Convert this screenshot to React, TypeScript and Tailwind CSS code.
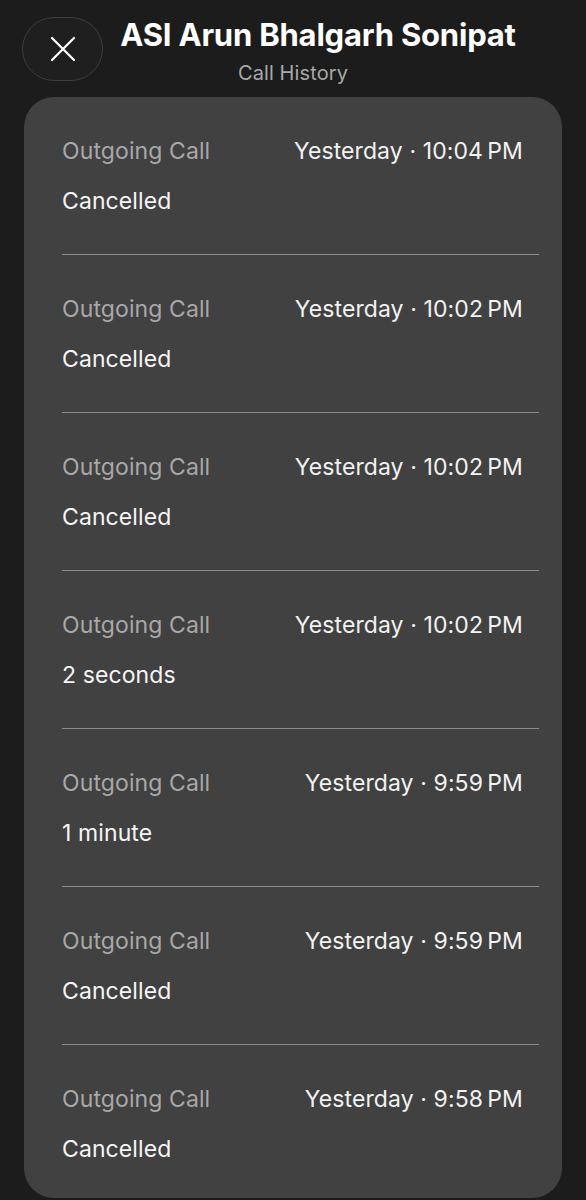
const calls = [
  { time: "Yesterday · 10:04\u202FPM", detail: "Cancelled" },
  { time: "Yesterday · 10:02\u202FPM", detail: "Cancelled" },
  { time: "Yesterday · 10:02\u202FPM", detail: "Cancelled" },
  { time: "Yesterday · 10:02\u202FPM", detail: "2 seconds" },
  { time: "Yesterday · 9:59\u202FPM", detail: "1 minute" },
  { time: "Yesterday · 9:59\u202FPM", detail: "Cancelled" },
  { time: "Yesterday · 9:58\u202FPM", detail: "Cancelled" },
];

export default function App() {
  return (
    <div
      className="w-[586px] h-[1200px] overflow-hidden bg-[#1c1c1c] text-white"
      style={{ fontFamily: "Inter, 'Liberation Sans', sans-serif" }}
    >
      <div className="relative h-[97px]">
        <button className="absolute left-[22px] top-[17px] w-[81px] h-[64px] rounded-[32px] bg-[#1f1f1f] border border-[#3d3d3d] flex items-center justify-center">
          <svg width="26" height="26" viewBox="0 0 26 26" fill="none" stroke="white" strokeWidth="2.2" strokeLinecap="round">
            <path d="M2 2 L24 24 M24 2 L2 24" />
          </svg>
        </button>
        <div className="pl-[50px] pt-[15px] text-center">
          <h1 className="text-[31px] leading-[40px] font-bold tracking-[-0.2px]">ASI Arun Bhalgarh Sonipat</h1>
        </div>
        <p className="text-center text-[20px] leading-[26px] text-[#a8a8a8] mt-[5px] tracking-[0.1px]">Call History</p>
      </div>

      <div className="mx-[24px] h-[1101px] rounded-[30px] bg-[#414141]">
        {calls.map((c, i) => (
          <div key={i} className={`ml-[38px] mr-[23px] pt-[40px] pb-[39px] ${i < calls.length - 1 ? "border-b border-[#8c8c8c]" : ""}`}>
            <div className="flex justify-between pr-[16px] text-[23px] leading-[28px] tracking-[0.1px]">
              <span className="text-[#a8a8a8]">Outgoing Call</span>
              <span className="text-[#f2f2f2]">{c.time}</span>
            </div>
            <div className="mt-[22px] text-[23px] leading-[28px] tracking-[0.1px] text-[#f5f5f5]">{c.detail}</div>
          </div>
        ))}
      </div>
    </div>
  );
}
